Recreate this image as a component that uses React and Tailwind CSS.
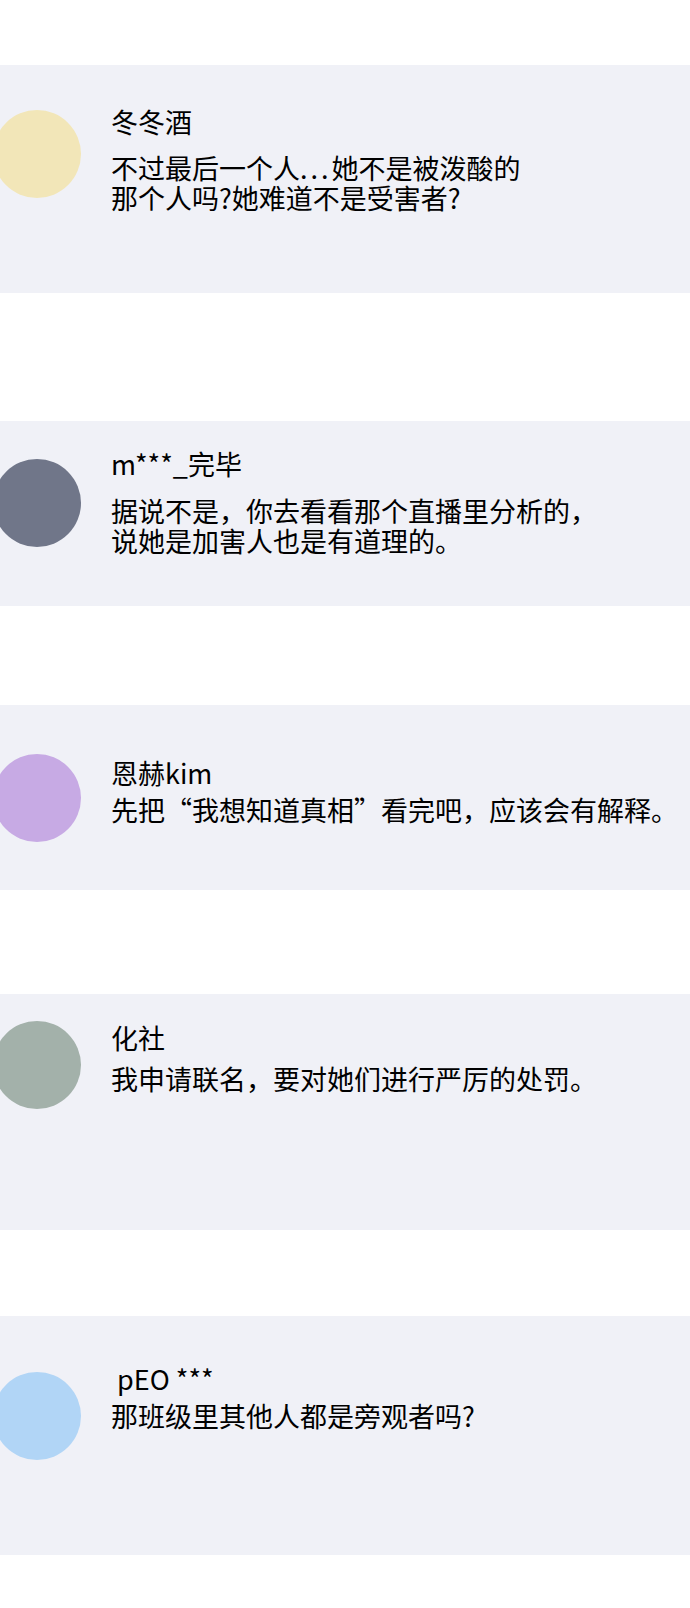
import React from "react";

const comments = [
  {
    name: "冬冬酒",
    lines: [
      <>
        不过最后一个人<span className="tracking-[3px]">...</span>她不是被泼酸的
      </>,
      "那个人吗?她难道不是受害者?",
    ],
    wrap: "mt-[65px] h-[228px]",
    avatar: "mt-[45px] bg-[#f2e6b8]",
    text: "mt-[42px]",
    gap: "mt-[16px]",
  },
  {
    name: "m***_完毕",
    lines: ["据说不是，你去看看那个直播里分析的，", "说她是加害人也是有道理的。"],
    wrap: "mt-[128px] h-[185px]",
    avatar: "mt-[38px] bg-[#707689]",
    text: "mt-[28px]",
    gap: "mt-[17px]",
  },
  {
    name: "恩赫kim",
    lines: ["先把“我想知道真相”看完吧，应该会有解释。"],
    wrap: "mt-[99px] h-[185px]",
    avatar: "mt-[49px] bg-[#c7aae4]",
    text: "mt-[53px]",
    gap: "mt-[7px]",
  },
  {
    name: "化社",
    lines: ["我申请联名，要对她们进行严厉的处罚。"],
    wrap: "mt-[104px] h-[236px]",
    avatar: "mt-[27px] bg-[#a3b1aa]",
    text: "mt-[29px]",
    gap: "mt-[11px]",
  },
  {
    name: " pEO ***",
    lines: ["那班级里其他人都是旁观者吗?"],
    wrap: "mt-[86px] h-[239px]",
    avatar: "mt-[56px] bg-[#b1d5f6]",
    text: "mt-[48px]",
    gap: "mt-[7px]",
  },
];

const CommentCard = ({ c }) => {
  return (
    <div className={`${c.wrap} w-full bg-[#f0f1f7] flex items-start overflow-hidden`}>
      <div className={`${c.avatar} -ml-[7px] w-[88px] h-[88px] rounded-full shrink-0`} />
      <div className={`${c.text} ml-[30px] text-black`}>
        <div className="text-[27px] leading-[30px] whitespace-pre">{c.name}</div>
        <div className={c.gap}>
          {c.lines.map((l, i) => (
            <div key={i} className="text-[27px] leading-[30px] whitespace-nowrap">
              {l}
            </div>
          ))}
        </div>
      </div>
    </div>
  );
};

export default function App() {
  return (
    <div
      className="w-[690px] h-[1608px] bg-white flex flex-col overflow-hidden"
      style={{ fontFamily: '"Noto Sans CJK SC", "Noto Sans", sans-serif' }}
    >
      {comments.map((c, i) => (
        <CommentCard key={i} c={c} />
      ))}
    </div>
  );
}
